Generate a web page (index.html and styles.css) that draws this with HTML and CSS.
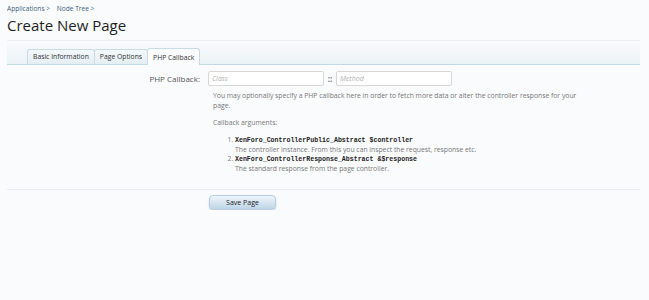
FILE: index.html
```html
<!DOCTYPE html>
<html lang="en">
<head>
  <meta charset="UTF-8" />
  <title>Create New Page</title>
  <link rel="stylesheet" href="styles.css">
</head>
<body>
  <div class="sivu">
    <!-- Breadcrumb -->
    <div class="murupolku">
      <a href="#">Applications</a> &gt; <a href="#">Node Tree</a> &gt;
    </div>

    <h1 class="otsikko">Create New Page</h1>

    <!-- Tabs -->
    <div class="valilehdet">
      <div class="valilehti">Basic Information</div>
      <div class="valilehti">Page Options</div>
      <div class="valilehti aktiivinen">PHP Callback</div>
    </div>

    <!-- Form -->
    <div class="lomake">
      <div class="rivi">
        <div class="nimi">PHP Callback:</div>
        <div class="kentat">
          <div class="syotteet">
            <input type="text" class="syote" placeholder="Class">
            <span class="erotin">::</span>
            <input type="text" class="syote" placeholder="Method">
          </div>
          <div class="selitys">
            <p>You may optionally specify a PHP callback here in order to fetch more data or alter the controller response for your page.</p>
            <p>Callback arguments:</p>
            <ol class="argumentit">
              <li><code>XenForo_ControllerPublic_Abstract $controller</code><br>The controller instance. From this you can inspect the request, response etc.</li>
              <li><code>XenForo_ControllerResponse_Abstract &amp;$response</code><br>The standard response from the page controller.</li>
            </ol>
          </div>
        </div>
      </div>

      <div class="napit">
        <button class="tallenna">Save Page</button>
      </div>
    </div>
  </div>
</body>
</html>
```
FILE: styles.css
```css
html, body {
  margin: 0;
  padding: 0;
  background: #fafbfd;
  font-family: 'Open Sans', 'DejaVu Sans', sans-serif;
  color: #333;
}

.sivu {
  padding: 3px 9px 0 7px;
}

.murupolku {
  font-size: 6.6px;
  line-height: 11px;
  color: #4a6a80;
}

.murupolku a {
  color: #3f6079;
  text-decoration: none;
}

.murupolku a:nth-child(2) {
  margin-left: 5px;
}

.otsikko {
  margin: 0;
  padding: 2px 0 5px;
  font-size: 15px;
  line-height: 19px;
  font-weight: normal;
  color: #1f1f1f;
  border-bottom: 1px solid #edf1f5;
}

.valilehdet {
  display: flex;
  align-items: flex-end;
  height: 23px;
  padding-left: 20px;
  background: linear-gradient(#fafbfd, #eaf3f7);
  border-bottom: 1px solid #c3d9e4;
}

.valilehti {
  font-size: 6.8px;
  line-height: 14px;
  height: 14px;
  padding: 0 5px;
  color: #333;
  border: 1px solid #c9dce6;
  border-bottom: none;
  border-radius: 3px 3px 0 0;
  background: linear-gradient(#f3f8fb, #e3eef4);
}

.valilehti + .valilehti {
  margin-left: -1px;
}

.valilehti.aktiivinen {
  height: 16px;
  line-height: 17px;
  background: #fbfcfe;
  margin-bottom: -1px;
}

.lomake {
  padding-top: 6px;
}

.rivi {
  display: flex;
  padding-bottom: 16px;
  border-bottom: 1px solid #e6ecf1;
}

.nimi {
  width: 193px;
  flex: none;
  text-align: right;
  font-size: 8px;
  line-height: 16px;
  color: #555;
}

.kentat {
  padding-left: 8px;
}

.syotteet {
  display: flex;
  align-items: center;
}

.syote {
  width: 116px;
  height: 15px;
  box-sizing: border-box;
  border: 1px solid #d7d7d7;
  border-radius: 2px;
  background: #fff;
  padding: 0 3px;
  font-family: inherit;
  font-size: 7px;
  font-style: italic;
}

.syote::placeholder {
  color: #b0b0b0;
}

.erotin {
  width: 12px;
  text-align: center;
  font-size: 8px;
  font-weight: bold;
  color: #777;
}

.selitys {
  padding-left: 5px;
  width: 372px;
  font-size: 6.8px;
  line-height: 10px;
  color: #777;
}

.selitys p {
  margin: 5px 0 7px;
}

.argumentit {
  margin: 0;
  padding-left: 22px;
  line-height: 9px;
}

.argumentit code {
  font-family: 'Liberation Mono', monospace;
  font-size: 6.6px;
  font-weight: bold;
  color: #222;
}

.napit {
  display: flex;
  padding: 5px 0 0 202px;
}

.tallenna {
  width: 67px;
  height: 15px;
  padding: 0;
  font-family: inherit;
  font-size: 7px;
  color: #222;
  border: 1px solid #b4cde0;
  border-radius: 4px;
  background: linear-gradient(#eef5fb, #bed5e6);
  box-shadow: 0 1px 2px rgba(0, 0, 0, 0.15);
}
```
